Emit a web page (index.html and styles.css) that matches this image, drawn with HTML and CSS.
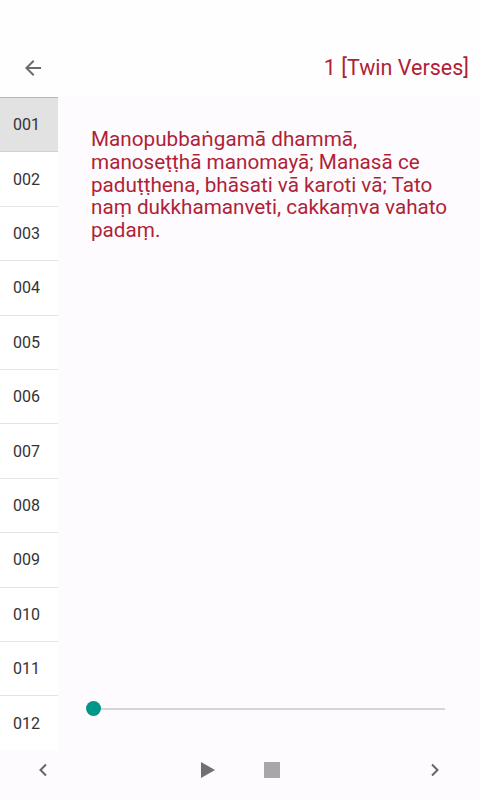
FILE: index.html
```html
<!DOCTYPE html>
<html lang="en">
<head>
    <meta charset="UTF-8">
    <meta name="viewport" content="width=device-width, initial-scale=1.0">
    <title>Dhammapada - Twin Verses</title>
    <link rel="stylesheet" href="styles.css">
</head>
<body>
    <div class="app">
        <header class="topbar">
            <button class="back" aria-label="Back">
                <svg width="24" height="24" viewBox="0 0 24 24"><path d="M20 11H7.83l5.59-5.59L12 4l-8 8 8 8 1.41-1.41L7.83 13H20v-2z" fill="#6b6b6b"/></svg>
            </button>
            <h1 class="chapter">1 [Twin Verses]</h1>
        </header>

        <div class="body">
            <ul class="verse-list">
                <li class="active">001</li>
                <li>002</li>
                <li>003</li>
                <li>004</li>
                <li>005</li>
                <li>006</li>
                <li>007</li>
                <li>008</li>
                <li>009</li>
                <li>010</li>
                <li>011</li>
                <li>012</li>
            </ul>
            <main class="reader">
                <p class="verse">Manopubbaṅgamā dhammā, manoseṭṭhā manomayā; Manasā ce paduṭṭhena, bhāsati vā karoti vā; Tato naṃ dukkhamanveti, cakkaṃva vahato padaṃ.</p>
                <div class="seek">
                    <span class="knob"></span>
                </div>
            </main>
        </div>

        <footer class="controls">
            <button class="nav prev" aria-label="Previous">
                <svg width="12" height="14" viewBox="0 0 12 14"><path d="M9 1.5L3.5 7 9 12.5" fill="none" stroke="#666" stroke-width="2"/></svg>
            </button>
            <div class="player">
                <button class="play" aria-label="Play">
                    <svg width="16" height="18" viewBox="0 0 16 18"><path d="M1 1l14 8-14 8z" fill="#707070"/></svg>
                </button>
                <button class="stop" aria-label="Stop"><span></span></button>
            </div>
            <button class="nav next" aria-label="Next">
                <svg width="12" height="14" viewBox="0 0 12 14"><path d="M3 1.5L8.5 7 3 12.5" fill="none" stroke="#666" stroke-width="2"/></svg>
            </button>
        </footer>
    </div>
</body>
</html>
```

FILE: styles.css
```css
:root {
    --crimson: #b01f38;
    --teal: #009688;
    --line: #e4e4e4;
    --text: #333333;
}

* {
    margin: 0;
    padding: 0;
    box-sizing: border-box;
}

body {
    font-family: Roboto, 'Noto Sans', sans-serif;
    background: #fdfbfd;
    color: var(--text);
}

button {
    background: none;
    border: none;
    cursor: pointer;
    display: flex;
    align-items: center;
    justify-content: center;
}

.app {
    width: 480px;
    height: 800px;
    display: flex;
    flex-direction: column;
    overflow: hidden;
}

/* Top bar */
.topbar {
    height: 97px;
    display: flex;
    align-items: flex-end;
    justify-content: space-between;
    padding: 0 11px 5px 9px;
    background: #fefefe;
}

.back {
    width: 48px;
    height: 48px;
}

.chapter {
    font-size: 21.5px;
    font-weight: normal;
    line-height: 48px;
    color: var(--crimson);
}

/* List + reader */
.body {
    flex: 1;
    display: flex;
    min-height: 0;
}

.verse-list {
    list-style: none;
    width: 58px;
    background: #fff;
    border-top: 1px solid #b8b8b8;
}

.verse-list li {
    height: 54.4px;
    display: flex;
    align-items: center;
    padding-left: 13px;
    font-size: 16px;
    color: var(--text);
    border-bottom: 1px solid var(--line);
}

.verse-list li:last-child {
    border-bottom: none;
}

.verse-list li.active {
    background: #e2e2e2;
    border-bottom-color: #d0d0d0;
}

.reader {
    flex: 1;
    display: flex;
    flex-direction: column;
    justify-content: space-between;
    padding: 31px 10px 40px 33px;
}

.verse {
    font-size: 20.7px;
    line-height: 22.8px;
    color: var(--crimson);
}

.seek {
    position: relative;
    height: 2px;
    background: #d6d4d6;
    margin-left: 2px;
    margin-right: 25px;
}

.knob {
    position: absolute;
    left: -7px;
    top: -7px;
    width: 15px;
    height: 15px;
    border-radius: 50%;
    background: var(--teal);
}

/* Bottom controls */
.controls {
    height: 50px;
    display: flex;
    align-items: center;
    padding: 0 33px 10px 31px;
}

.nav {
    width: 24px;
    height: 24px;
}

.player {
    flex: 1;
    display: flex;
    gap: 40px;
    padding-left: 141px;
}

.play, .stop {
    width: 24px;
    height: 24px;
}

.stop span {
    display: block;
    width: 16px;
    height: 16px;
    background: #a9a5a9;
}
```
